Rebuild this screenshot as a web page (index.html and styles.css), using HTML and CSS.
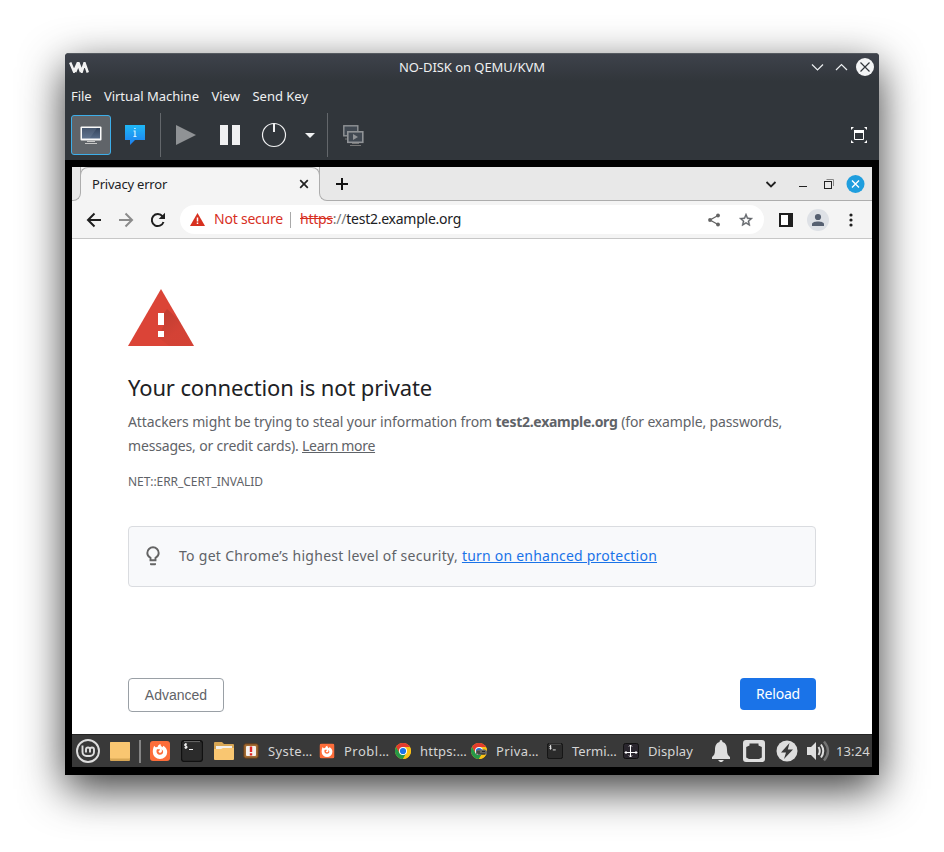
FILE: index.html
```
<!DOCTYPE html>
<html lang="en">
<head>
<meta charset="utf-8">
<title>NO-DISK on QEMU/KVM</title>
<link rel="stylesheet" href="styles.css">
</head>
<body>
<svg width="0" height="0" class="defs" aria-hidden="true">
  <defs>
    <linearGradient id="screen" x1="0" y1="0" x2="0" y2="1"><stop offset="0" stop-color="#33435b"/><stop offset="1" stop-color="#566b88"/></linearGradient>
    <linearGradient id="blue" x1="0" y1="0" x2="0" y2="1"><stop offset="0" stop-color="#1fb8f6"/><stop offset="1" stop-color="#1d7ff0"/></linearGradient>
    <linearGradient id="shade" x1="34" y1="27" x2="54" y2="50" gradientUnits="userSpaceOnUse"><stop offset="0" stop-color="#7a2c22" stop-opacity=".26"/><stop offset=".7" stop-color="#7a2c22" stop-opacity=".08"/></linearGradient>
    <symbol id="firefox" viewBox="0 0 20 20">
      <rect width="20" height="20" rx="3" fill="#fd6d3a"/>
      <path d="M4.200 4.800 5.500 6.200 7.500 6C8 4.500 9 3.300 10.500 3 10.300 4.600 11.200 5.200 12.600 6.200L13.300 4.800C15.800 6.500 17.200 8.500 17.200 11A7.200 7 0 0 1 2.800 11C2.800 8.700 3.200 6.600 4.200 4.800Z" fill="#fff"/>
      <path d="M7 8.200 9.800 8.300C10.200 9.100 9.600 9.700 8.500 10 8.500 11.500 9.800 12.200 11 11.500 12.200 10.800 12.200 9.300 11.500 8.200 13.300 9.200 13.600 11.300 12.500 12.700 11 14.300 8.400 14.100 7.200 12.400 6.300 11.100 6.300 9.500 7 8.200Z" fill="#fd6d3a"/>
    </symbol>
    <symbol id="terminal" viewBox="0 0 22 22">
      <rect x=".5" y=".5" width="21" height="21" rx="3" fill="#2b2b2b" stroke="#111" stroke-width="1.300"/>
      <path d="M3 1.600H19" stroke="#6c6c6c"/>
      <path d="M6 4.300C4.800 3.700 3.700 4.100 3.700 5 3.700 6.300 6 5.700 6 7 6 8 4.700 8.300 3.500 7.600M4.800 3V9M8 9.500H12" fill="none" stroke="#eee" stroke-width="1.200"/>
    </symbol>
    <symbol id="chrome" viewBox="0 0 16 16">
      <circle cx="8" cy="8" r="8" fill="#fbc116"/>
      <path d="M1.070 4A8 8 0 0 1 14.930 4L8 4 8 8 4.500 10Z" fill="#e33b2e"/>
      <path d="M1.070 4 4.500 10 8 11.600 11.500 10 8 16A8 8 0 0 1 1.070 4Z" fill="#279847"/>
      <path d="M14.930 4H8L11.500 10 8 16A8 8 0 0 0 14.930 4Z" fill="#fbc116"/>
      <circle cx="8" cy="8" r="4" fill="#fff"/><circle cx="8" cy="8" r="3.100" fill="#1a73e8"/>
    </symbol>
  </defs>
</svg>

<main class="window">
  <header class="titlebar">
    <svg class="vmm" width="20" height="11" viewBox="0 0 20 11"><path d="M1.200 .5 5 9.500 8.800 1 12 10M6.200 10 9.700 1.500 12.800 9.500 15.500 1 18.800 10.500" fill="none" stroke="#f2f2f2" stroke-width="2.500"/></svg>
    <h1 class="title">NO-DISK on QEMU/KVM</h1>
    <svg class="controls" width="64" height="20" viewBox="0 0 64 20"><path d="M2 7.500 7.500 13 13 7.500M26 13 31.500 7.500 37 13" fill="none" stroke="#eceff1" stroke-width="1.200"/><circle cx="55" cy="10" r="9" fill="#f3f4f5"/><path d="M50.500 5.500 59.500 14.500M59.500 5.500 50.500 14.500" stroke="#31363b" stroke-width="1.200"/></svg>
  </header>
  <nav class="menubar"><span class="m-file">File</span><span class="m-vm">Virtual Machine</span><span>View</span><span>Send Key</span></nav>
  <div class="toolbar">
    <div class="tool-active"><svg width="22" height="20" viewBox="0 0 22 20"><rect x=".5" y="1.500" width="21" height="14" rx="1" fill="#fafafa"/><rect x="2" y="3" width="18" height="10.500" fill="url(#screen)"/><path d="M2 3H17L10 13H2Z" fill="#7888a0" opacity=".3"/><path d="M7 16H15V17H7ZM5 18H17V19H5Z" fill="#c7c7c7"/></svg></div>
    <svg class="info" width="20" height="20" viewBox="0 0 20 20"><path d="M0 0H20V15H10L5 20V15H0Z" fill="url(#blue)"/><path d="M8.500 6H10V11.500M8.500 11.500H11.500M9.200 3.500H10.700" fill="none" stroke="#d7f2ff" stroke-width="1.200"/></svg>
    <i class="tool-sep"></i>
    <svg class="play" width="20" height="20" viewBox="0 0 20 20"><path d="M0 0 20 10 0 20Z" fill="#8f9295"/></svg>
    <svg class="pause" width="20" height="20" viewBox="0 0 20 20"><path d="M0 0H8V20H0ZM12 0H20V20H12Z" fill="#f0f1f2"/></svg>
    <svg class="power" width="26" height="26" viewBox="0 0 26 26"><circle cx="13" cy="13" r="11.500" fill="none" stroke="#f0f1f2" stroke-width="1.200"/><path d="M13 1V10" stroke="#f0f1f2" stroke-width="2"/></svg>
    <svg class="drop" width="10" height="5" viewBox="0 0 10 5"><path d="M0 0H10L5 5Z" fill="#f0f1f2"/></svg>
    <i class="tool-sep"></i>
    <svg class="snapshots" width="21" height="21" viewBox="0 0 21 21"><rect x=".8" y=".8" width="14" height="10" fill="#414952" stroke="#909396" stroke-width="1.400"/><path d="M2 14H5" stroke="#777"/><rect x="4.800" y="6.800" width="15" height="10.500" fill="#414952" stroke="#909396" stroke-width="1.600"/><path d="M10 9 15 12 10 15Z" fill="#909396"/><path d="M9 18.500H16M7 20.500H18" stroke="#777"/></svg>
    <svg class="fullscreen" width="16" height="16" viewBox="0 0 16 16"><path d="M3.500 3.500H12.500V12.500H3.500Z" fill="none" stroke="#fff"/><path d="M3 3H13V6H3ZM0 0H3L0 3ZM16 0V3L13 0ZM0 13 3 16H0ZM16 13V16H13Z" fill="#fff"/></svg>
  </div>

  <section class="guest">
    <div class="browser">
      <div class="tabstrip">
        <i class="edge"></i>
        <div class="tab"><span>Privacy error</span><svg width="10" height="10" viewBox="0 0 10 10"><path d="M1.200 1.200 8.800 8.800M8.800 1.200 1.200 8.800" stroke="#222" stroke-width="1.700"/></svg></div>
        <div class="strip-rest">
          <svg class="plus" width="12" height="12" viewBox="0 0 12 12"><path d="M6 0V12M0 6H12" stroke="#111" stroke-width="2"/></svg>
          <svg width="100" height="20" viewBox="0 0 100 20"><path d="M1.500 8 6 12.500 10.500 8" fill="none" stroke="#222" stroke-width="1.800"/><path d="M34 12.500H42" stroke="#222" stroke-width="1.200"/><path d="M61.500 5.500H68.500V12" fill="none" stroke="#888"/><rect x="59.500" y="7.500" width="7" height="7" fill="none" stroke="#222"/><circle cx="90.500" cy="10" r="9" fill="#1f9ede"/><path d="M87 6.500 94 13.500M94 6.500 87 13.500" stroke="#fff" stroke-width="1.400"/></svg>
        </div>
      </div>
      <div class="addressbar">
        <svg width="80" height="18" viewBox="0 0 80 18" fill="none"><path d="M15 9H2M8.500 2.500 2 9 8.500 15.500" stroke="#1f1f1f" stroke-width="2"/><path d="M33 9H46M39.500 2.500 46 9 39.500 15.500" stroke="#8b8b8b" stroke-width="2"/><path d="M76.500 5.300A6 6 0 1 0 77.500 11" stroke="#1f1f1f" stroke-width="2"/><path d="M79 1.700V8H72.700Z" fill="#1f1f1f"/></svg>
        <div class="omnibox">
          <svg class="warn" width="15" height="13" viewBox="0 0 15 13"><path d="M7.500 0 15 13H0Z" fill="#d7301f"/><path d="M7.500 4.500V8.500M7.500 9.500V11" stroke="#fff" stroke-width="1.500"/></svg>
          <span class="notsecure">Not secure</span><i class="divider"></i>
          <span class="url"><s>https</s><span class="slashes">://</span>test2.example.org</span>
          <svg class="share" width="14" height="14" viewBox="0 0 14 14"><path d="M11 2.500 3 7 11 11.500" fill="none" stroke="#646464" stroke-width="1.300"/><circle cx="11" cy="2.500" r="1.900" fill="#646464"/><circle cx="3" cy="7" r="1.900" fill="#646464"/><circle cx="11" cy="11.500" r="1.900" fill="#646464"/></svg>
          <svg class="star" width="16" height="16" viewBox="0 0 24 24"><path d="M22 9.240l-7.190-.62L12 2 9.190 8.630 2 9.240l5.460 4.730L5.820 21 12 17.270 18.180 21l-1.630-7.030zM12 15.400l-3.760 2.270 1-4.280-3.320-2.880 4.380-.38L12 6.100l1.710 4.040 4.380.38-3.320 2.880 1 4.280z" fill="#5f6368" stroke="#5f6368" stroke-width=".6"/></svg>
        </div>
        <svg class="side" width="14" height="14" viewBox="0 0 14 14"><path d="M1 1H13V13H1Z" fill="#fff" stroke="#1f1f1f" stroke-width="2"/><path d="M9 0H14V14H9Z" fill="#1f1f1f"/></svg>
        <svg class="avatar" width="22" height="22" viewBox="0 0 22 22"><circle cx="11" cy="11" r="11" fill="#dee1e6"/><circle cx="11" cy="8" r="3.100" fill="#566071"/><path d="M5 17V15C5 11.500 17 11.500 17 15V17Z" fill="#566071"/></svg>
        <svg class="dots" width="4" height="14" viewBox="0 0 4 14"><circle cx="2" cy="2" r="1.600"/><circle cx="2" cy="7" r="1.600"/><circle cx="2" cy="12" r="1.600"/></svg>
      </div>

      <article class="page">
        <svg class="alert" width="66" height="57" viewBox="0 0 66 57"><path d="M33 0 66 57H0Z" fill="#db4437"/><path d="M36 24 39 20 51 31 66 57H41L30 48 36 36Z" fill="url(#shade)"/><path d="M30 24H36V36H30ZM30 42H36V48H30Z" fill="#fff"/></svg>
        <h2>Your connection is not private</h2>
        <p class="copy"><span class="c1">Attackers might be trying to steal your information from </span><b>test2.example.org</b> <span class="c2">(for example, passwords,</span><br><span class="c3">messages, or credit cards). </span><a class="learn">Learn more</a></p>
        <p class="code">NET::ERR_CERT_INVALID</p>
        <div class="tip">
          <svg width="14" height="20" viewBox="0 0 14 20"><path d="M4.500 14.200V11.800C2.500 10.700 1.300 9 1.300 7A5.700 5.700 0 0 1 12.700 7C12.700 9 11.500 10.700 9.500 11.800V14.200Z" fill="none" stroke="#646464" stroke-width="1.900"/><path d="M4 17.300H10V18.300A1 1 0 0 1 9 19.300H5A1 1 0 0 1 4 18.300Z" fill="#646464"/></svg>
          <p><span class="t1">To get Chrome’s highest level of security, </span><a class="enhanced">turn on enhanced protection</a></p>
        </div>
        <div class="actions"><button class="advanced">Advanced</button><button class="reload">Reload</button></div>
      </article>
    </div>

    <footer class="taskbar">
      <div class="launchers">
        <svg class="mint" width="24" height="24" viewBox="0 0 24 24" fill="none" stroke="#dedede"><circle cx="12" cy="12" r="11" stroke-width="1.900"/><path d="M6.500 6.500V13A4 4 0 0 0 10.500 17H14A4 4 0 0 0 18 13V10.500A2 2 0 0 0 14 10.500V13.500M14 10.500A2 2 0 0 0 10 10.500V13.500" stroke-width="1.900"/></svg>
        <svg class="desk" width="20" height="19" viewBox="0 0 20 19"><rect width="20" height="19" rx="1" fill="#d7a654"/><rect width="20" height="16.500" rx="1" fill="#f9c671"/></svg>
        <i class="bar-sep"></i>
        <svg class="ff" width="20" height="20"><use href="#firefox"/></svg>
        <svg class="term" width="22" height="22"><use href="#terminal"/></svg>
        <svg class="folder" width="20" height="18" viewBox="0 0 20 18"><path d="M0 1Q0 0 1 0H8L10 2H19Q20 2 20 3V17H0Z" fill="#d7a654"/><path d="M2 4H18V7H2Z" fill="#f4f0ea"/><path d="M0 7H7L9 6H20V17Q20 18 19 18H1Q0 18 0 17Z" fill="#f9c671"/></svg>
      </div>
      <div class="tasks">
        <div><svg width="16" height="16" viewBox="0 0 16 16"><rect x=".8" y=".8" width="14.400" height="14.400" rx="2" fill="#a46c32" stroke="#633d1d"/><rect x="3" y="3" width="10" height="10" rx="1" fill="#f5f0ed"/><path d="M8 3.500V9M8 10.300V12.500" stroke="#e02424" stroke-width="2.400"/></svg><span class="k1">Syste…</span></div>
        <div><svg width="16" height="16"><use href="#firefox" x=".5" y=".5" width="15" height="15"/></svg><span class="k2">Probl…</span></div>
        <div><svg width="16" height="16"><use href="#chrome"/></svg><span class="k3">https:…</span></div>
        <div><svg width="16" height="16" viewBox="0 0 16 16"><use href="#chrome"/><path d="M5 8 7 6.500H14L16 8V11.500H5Z" fill="#636363"/><path d="M6 9H9M11 8.500H14M7 11H14" stroke="#272727"/></svg><span class="k4">Priva…</span></div>
        <div><svg width="16" height="16"><use href="#terminal"/></svg><span>Termi…</span></div>
        <div><svg width="16" height="16" viewBox="0 0 16 16"><rect x=".5" y=".5" width="15" height="15" rx="2" fill="#29252d" stroke="#111"/><path d="M7.500 2V14M2 9.500H14M6 3.500 7.500 2 9 3.500M6 12.500 7.500 14 9 12.500M3.500 8 2 9.500 3.500 11M12.500 8 14 9.500 12.500 11" fill="none" stroke="#fff"/></svg><span class="k6">Display</span></div>
      </div>
      <div class="tray">
        <svg class="bell" width="18" height="22" viewBox="0 0 18 22"><path d="M9 0Q10.500 0 10.500 2C14 3 15 6 15 10C15 14 16 15.500 18 17V19H0V17C2 15.500 3 14 3 10C3 6 4 3 7.500 2Q7.500 0 9 0ZM6 20H12L10 22H8Z" fill="#dedede"/></svg>
        <svg class="net" width="22" height="22" viewBox="0 0 22 22"><path fill-rule="evenodd" d="M3 0H19Q22 0 22 3V19Q22 22 19 22H3Q0 22 0 19V3Q0 0 3 0ZM6.500 3.500V5.500L3.200 7V17.500L6 19H16L18.800 17.500V7L15.500 5.500V3.500Z" fill="#dedede"/></svg>
        <svg class="bolt" width="22" height="22" viewBox="0 0 22 22"><circle cx="11" cy="11" r="10.500" fill="#dedede"/><path d="M13.500 3 5 12.500H10L8 19 17 9.500H11.800Z" fill="#393939"/></svg>
        <svg class="vol" width="23" height="22" viewBox="0 0 23 22"><path d="M0 7H4L9 2V20L4 15H0Z" fill="#dedede"/><path d="M11.500 7Q14 11 11.500 15M14 4.500Q18.500 11 14 17.500" fill="none" stroke="#dedede" stroke-width="2"/><path d="M17 1.500Q25 11 17 20.500" fill="none" stroke="#737373" stroke-width="2.400"/></svg>
        <span class="clock">13:24</span>
      </div>
    </footer>
  </section>
</main>
</body>
</html>
```
FILE: styles.css
```
* { box-sizing: border-box; }
html, body { height: 100%; }
body { margin: 0; padding: 53px 65px 0; overflow: hidden; background: #fff; font: 13px "Noto Sans", sans-serif; color: #eff0f1; }
svg, i { display: block; flex: none; }
h1, h2, p { margin: 0; font-weight: 400; }
.defs { position: absolute; }

.window { width: 814px; height: 722px; display: flex; flex-direction: column; border-radius: 4px 4px 0 0; background: #31363b; box-shadow: 0 14px 44px rgba(0,0,0,.78); overflow: hidden; }
.titlebar { height: 28px; display: grid; grid-template-columns: 1fr auto 1fr; align-items: center; padding: 0 4px 1px; background: linear-gradient(#3e424b, #31363b); border-top: 1px solid #555a60; }
.title { font-size: 13px; line-height: 20px; letter-spacing: -.05px; }
.controls { justify-self: end; margin-right: 1px; }
.menubar { height: 30px; display: flex; gap: 12.500px; padding: 0 6px; line-height: 31px; }
.m-file { letter-spacing: -.1px; }
.m-vm { letter-spacing: -.02px; }

.toolbar { height: 49px; display: flex; align-items: center; padding: 0 12px 2px 6px; }
.tool-active { width: 40px; height: 40px; display: grid; place-items: center; border: 1px solid #3daee9; border-radius: 3px; background: #606469; }
.info { margin-left: 14px; }
.tool-sep { width: 1px; height: 44px; margin: 0 15px; background: #63676b; }
.pause { margin-left: 24px; }
.power { margin-left: 21px; }
.drop { margin: 2px -3px 0 18px; }
.snapshots { margin-top: 1px; }
.fullscreen { margin-left: auto; }

.guest { height: 615px; padding: 7px; background: #000; }
.browser { height: 567px; display: flex; flex-direction: column; background: #fff; color: #202124; }
.tabstrip { height: 34px; display: flex; background: #f4f4f4; }
.edge { width: 9px; margin-right: -1px; background: #e8e8e8; border-right: 1px solid #adadad; border-bottom: 1px solid #adadad; border-bottom-right-radius: 8px; }
.tab { width: 240px; display: flex; align-items: center; justify-content: space-between; padding: 6px 10px 0 11px; border: 1px solid #adadad; border-bottom: 0; border-radius: 8px 8px 0 0; background: #f4f4f4; margin-bottom: 8px; letter-spacing: -.21px; }
.strip-rest { flex: 1; margin-left: -1px; display: flex; align-items: center; justify-content: space-between; padding: 0 7px 0 16px; background: #e8e8e8; border-left: 1px solid #adadad; border-bottom: 1px solid #adadad; border-bottom-left-radius: 8px; }
.addressbar { height: 38px; display: flex; align-items: center; padding-left: 14px; background: #f4f4f4; border-bottom: 1px solid #c7c7c7; }
.omnibox { width: 584px; height: 29px; margin-left: 14px; display: flex; align-items: center; padding: 0 10px; border-radius: 15px; background: #fff; font-size: 14px; }
.notsecure { width: 76px; margin: 0 0 2px 9px; color: #d7301f; letter-spacing: -.22px; }
.divider { width: 1px; height: 16px; margin-right: 9px; background: #a9a9a9; }
.url { margin-bottom: 2px; letter-spacing: -.25px; }
.url s { color: #d7301f; }
.slashes { color: #777; }
.share { margin-left: auto; }
.star { margin-left: 17px; }
.side { margin-left: 15px; }
.avatar { margin-left: 14px; }
.dots { margin-left: 20px; fill: #1f1f1f; }

.page { width: 688px; margin: 50px 0 0 56px; color: #5f6368; font-size: 14px; }
h2 { margin-top: 25px; font-size: 22px; line-height: 32px; letter-spacing: -.13px; color: #202124; }
.copy { margin-top: 7px; line-height: 24px; white-space: nowrap; }
.c1 { letter-spacing: -.1px; }
.copy b { letter-spacing: -.28px; }
.c2 { letter-spacing: -.14px; }
.c3 { letter-spacing: -.17px; }
.learn { letter-spacing: -.31px; text-decoration: underline; }
.code { margin-top: 13px; font-size: 12px; line-height: 22px; letter-spacing: -.06px; }
.tip { height: 61px; margin-top: 33px; display: flex; align-items: center; gap: 19px; padding: 0 17px 2px; border: 1px solid #dadce0; border-radius: 4px; background: #f8f9fb; }
.tip p { white-space: nowrap; line-height: 24px; }
.t1 { letter-spacing: .29px; }
.enhanced { letter-spacing: .22px; color: #1a73e8; text-decoration: underline; }
.actions { display: flex; justify-content: space-between; align-items: flex-start; margin-top: 91px; }
button { font: 14px "Liberation Sans", sans-serif; border-radius: 4px; padding: 0; }
.advanced { width: 96px; height: 34px; border: 1px solid #9aa0a6; background: #fff; color: #5f6368; }
.reload { width: 76px; height: 32px; padding-bottom: 2px; border: 0; background: #1a73e8; color: #fff; font-family: "Noto Sans", sans-serif; letter-spacing: -.19px; }

.taskbar { height: 33px; display: flex; align-items: center; background: #393939; border-top: 1px solid #252525; color: #d5d5d5; white-space: nowrap; }
.launchers { width: 171px; display: flex; align-items: center; padding-left: 4px; }
.desk { margin-left: 10px; }
.bar-sep { width: 2px; height: 23px; margin: 0 9px; background: #858585; }
.term { margin-left: 11px; }
.folder { margin-left: 11px; }
.tasks { display: grid; grid-template-columns: repeat(6, 76px); }
.tasks div { display: flex; align-items: center; gap: 9px; }
.k1 { letter-spacing: .4px; }
.k2 { letter-spacing: .5px; }
.k3 { letter-spacing: .23px; }
.k4 { letter-spacing: .37px; }
.k6 { letter-spacing: .09px; }
.tray { display: flex; align-items: center; margin-left: 13px; }
.net { margin-left: 13px; }
.bolt { margin-left: 11px; }
.vol { margin-left: 9px; }
.clock { margin-left: 6px; letter-spacing: .1px; }
```
